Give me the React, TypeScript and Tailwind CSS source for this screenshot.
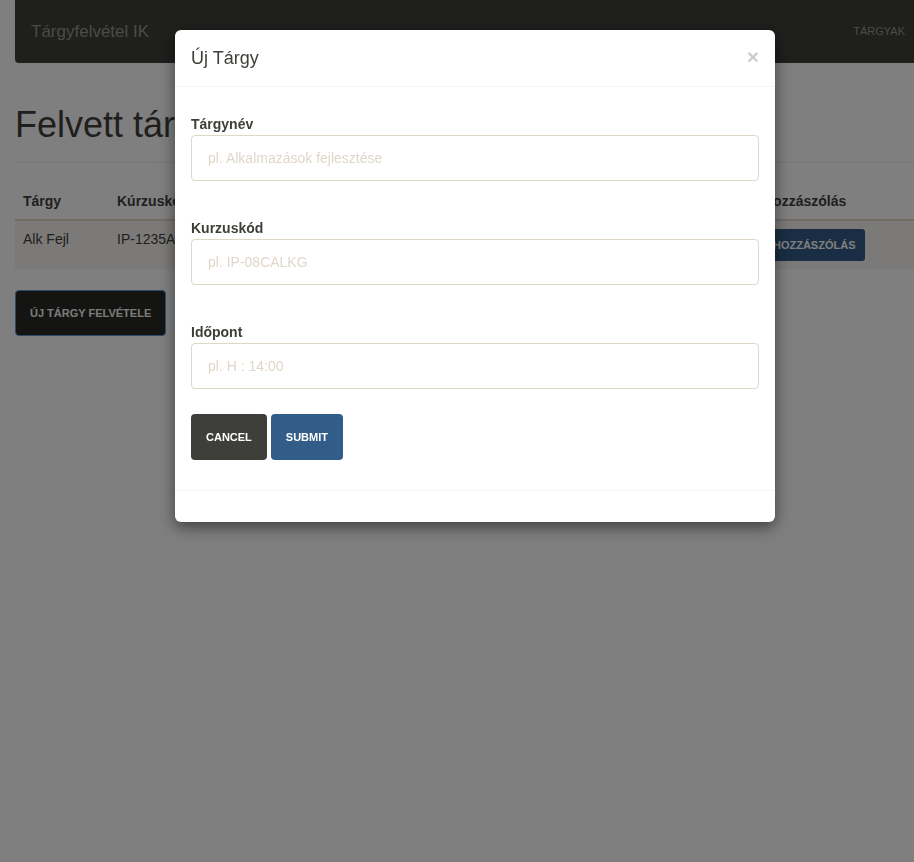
const columns = ["Tárgy", "Kúrzuskód", "Időpont", "Oktató", "Hozzászólás"];

function Field({ label, placeholder, first }: { label: string; placeholder: string; first?: boolean }) {
  return (
    <div className={first ? "" : "mt-[37px]"}>
      <label className="mb-px block text-[14px] font-bold leading-5 text-[#3e3f3a]">{label}</label>
      <input
        type="text"
        placeholder={placeholder}
        className="h-[46px] w-full rounded-[4px] border border-[#dfd7ca] px-4 text-[14px] text-[#3e3f3a] outline-none placeholder:text-[#dfd7ca]"
      />
    </div>
  );
}

export default function App() {
  return (
    <div className="relative min-h-[862px] overflow-hidden bg-white font-['Liberation_Sans',Arial,sans-serif] text-[#3e3f3a]">
      {/* Navbar */}
      <nav className="ml-[15px] flex h-[63px] items-center justify-between rounded-bl-[4px] bg-[#3e3f3a] pl-4 pr-[9px]">
        <span className="text-[17px] text-[#98978b]">Tárgyfelvétel IK</span>
        <span className="text-[11px] uppercase text-[#98978b]">Tárgyak</span>
      </nav>

      <div className="pl-[15px]">
        <h1 className="mt-[42px] border-b border-[#eeeeee] pb-[17px] text-[36px] leading-[40px]">Felvett tárgyak</h1>

        {/* Table */}
        <div className="mt-[20px] text-[14px] leading-5">
          <div className="grid grid-cols-[94px_1fr_1fr_1fr_159px] border-b-2 border-[#dfd7ca] font-bold">
            {columns.map((c) => (
              <div key={c} className="p-2">{c}</div>
            ))}
          </div>
          <div className="grid grid-cols-[94px_1fr_1fr_1fr_159px] bg-[#f8f5f0]">
            <div className="p-2">Alk Fejl</div>
            <div className="p-2">IP-1235A</div>
            <div className="p-2">K 12:00</div>
            <div className="p-2">Kovács Péter</div>
            <div className="p-2">
              <button className="h-8 rounded-[3px] bg-[#325d88] px-[10px] text-[11px] font-bold uppercase text-white">
                Hozzászólás
              </button>
            </div>
          </div>
        </div>

        <button className="mt-[21px] h-[46px] rounded-[4px] border border-[#5a94d4] bg-[#282824] px-[14px] text-[11px] font-bold uppercase text-[#f4f4f4]">
          Új tárgy felvétele
        </button>
      </div>

      {/* Backdrop */}
      <div className="fixed inset-0 bg-black/50" />

      {/* Modal */}
      <div className="absolute left-[175px] top-[30px] w-[600px] rounded-[6px] bg-white shadow-[0_5px_15px_rgba(0,0,0,0.5)]">
        <div className="flex items-start justify-between border-b border-[#f8f5f0] px-4 py-[15px]">
          <h4 className="text-[18px] leading-[26px] text-[#3e3f3a]">Új Tárgy</h4>
          <button className="mt-[1px] text-[21px] font-bold leading-[21px] text-black opacity-20">×</button>
        </div>

        <div className="px-4 pb-[30px] pt-[27px]">
          <Field first label="Tárgynév" placeholder="pl. Alkalmazások fejlesztése" />
          <Field label="Kurzuskód" placeholder="pl. IP-08CALKG" />
          <Field label="Időpont" placeholder="pl. H : 14:00" />

          <div className="mt-[25px] flex gap-1">
            <button className="h-[46px] rounded-[4px] bg-[#3e3f3a] px-[15px] text-[11px] font-bold uppercase text-white">
              Cancel
            </button>
            <button className="h-[46px] rounded-[4px] bg-[#325d88] px-[15px] text-[11px] font-bold uppercase text-white">
              Submit
            </button>
          </div>
        </div>

        <div className="h-[32px] border-t border-[#f8f5f0]" />
      </div>
    </div>
  );
}
